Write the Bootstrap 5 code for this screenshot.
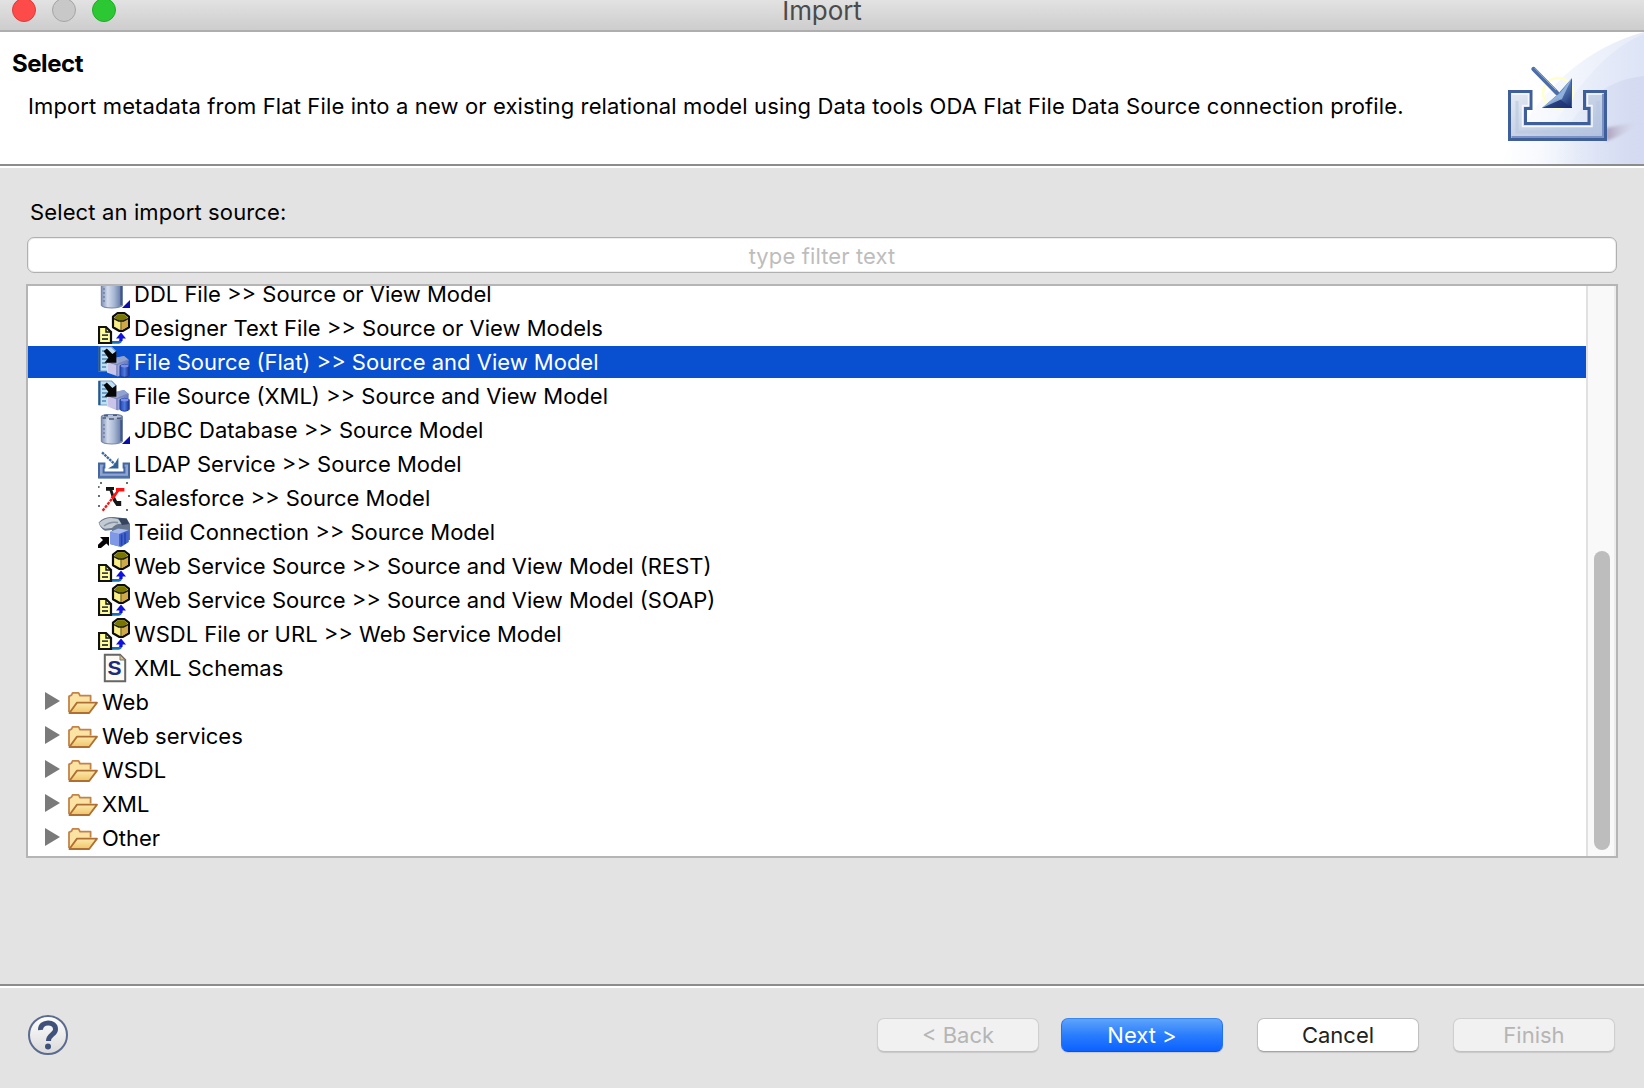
<!DOCTYPE html>
<html lang="en">
<head>
<meta charset="utf-8">
<title>Import</title>
<meta name="viewport" content="width=device-width, initial-scale=1">
<link href="https://cdn.jsdelivr.net/npm/bootstrap@5.3.0/dist/css/bootstrap.min.css" rel="stylesheet">
<style>
  body { font-family: Inter, "Liberation Sans", sans-serif; font-size: 22px; line-height: 32px; color: #000; background: #e3e3e3; }
  .wizard { height: 1088px; width: 1644px; }
  .titlebar { height: 32px; background: linear-gradient(#e2e2e2, #cdcdcd); border-bottom: 2px solid #aeaeae; }
  .lights { left: 12px; top: -2px; gap: 16px; }
  .light { width: 24px; height: 24px; border: 1px solid; }
  .light-close { background: #fd4b4a; border-color: #e0393a; }
  .light-min { background: #c8c8c8; border-color: #a5a5a5; }
  .light-max { background: #2bc833; border-color: #1fad28; }
  .window-title { font-size: 26px; line-height: 22px; color: #4b4b4b; letter-spacing: -.1px; }
  .banner { height: 134px; border-bottom: 2px solid #8c8c8c; }
  .banner-copy { padding: 16px 0 0 12px; }
  .banner h1 { font-size: 24px; line-height: 32px; font-weight: 700; letter-spacing: -.45px; }
  .banner p { padding: 10px 0 0 16px; letter-spacing: .128px; }
  .content-pane { height: 820px; border-top: 2px solid #fff; border-bottom: 2px solid #8c8c8c; padding: 28px 26px 0; }
  .source-label { padding-left: 4px; line-height: 32px; letter-spacing: .13px; }
  .filter { height: 36px; width: 1590px; margin: 9px 0 11px 1px; padding: 1px 0 0; border: 1px solid #b0b0b0; border-radius: 7px; font-size: 22px; box-shadow: inset 0 0 0 1px #eee; color: #000; letter-spacing: .12px; }
  .filter::placeholder { color: #bdbdbd; opacity: 1; }
  .tree-frame { width: 1592px; height: 574px; border: 2px solid #b5b5b5; }
  .tree { margin-top: -8px; gap: 2px; }
  .tree li { height: 32px; white-space: nowrap; }
  .tree .leaf { padding-left: 70px; }
  .tree .leaf svg { margin-right: 4px; }
  .tree .branch { padding-left: 17px; }
  .tree .twisty { width: 15px; height: 18px; margin-right: 6px; margin-top: -2px; }
  .tree .branch .ico { margin-right: 4px; }
  .ico { width: 32px; height: 32px; flex: none; }
  .tree .chosen { background: #0950d0; color: #fff; }
  .track { width: 30px; border-left: 2px solid #e1e1e1; border-right: 2px solid #ececec; background: #f9f9f9; padding: 265px 4px 6px 6px; }
  .thumb { width: 16px; height: 299px; background: #bdbdbd; border-radius: 8px; }
  .footer-bar { height: 100px; border-top: 2px solid #fff; padding: 0 29px 4px 28px; }
  .push { width: 162px; height: 34px; padding: 0; font-size: 22px; line-height: 32px; border-radius: 7px; border: 1px solid #c0c0c0; border-bottom-color: #a5a5a5; background: #fff; color: #222; box-shadow: 0 1px 1px rgba(0,0,0,.12); }
  .push:disabled { opacity: 1; background: #f1f1f1; color: #b5b5b5; border-color: #cfcfcf; border-bottom-color: #c0c0c0; }
  .push-main { background: linear-gradient(#5ea4fb, #2a7dfc 50%, #0a62ff); border-color: #3a86f2 #2170fa #0a50ec; color: #fff; }
  .gap-wide { margin-left: 34px; }
  .gap-near { margin-left: 22px; }
</style>
<script src="https://cdn.jsdelivr.net/npm/bootstrap@5.3.0/dist/js/bootstrap.bundle.min.js"></script>
</head>
<body class="overflow-hidden">
<svg width="0" height="0" class="position-absolute">
  <defs>
    <linearGradient id="cylFill"><stop offset="0" stop-color="#7f8fb4"/><stop offset=".3" stop-color="#d3dcec"/><stop offset=".6" stop-color="#a9b8d4"/><stop offset="1" stop-color="#5a6f9c"/></linearGradient>
    <linearGradient id="foldFill" x2="0" y2="1"><stop offset="0" stop-color="#fdeaae"/><stop offset="1" stop-color="#efc467"/></linearGradient>
    <linearGradient id="cubeFill"><stop offset="0" stop-color="#dcdcf4"/><stop offset="1" stop-color="#5c77bb"/></linearGradient>
    <linearGradient id="blueFill"><stop offset="0" stop-color="#2146b0"/><stop offset=".5" stop-color="#4f79dc"/><stop offset="1" stop-color="#132f90"/></linearGradient>
  </defs>
  <symbol id="i-db" viewBox="0 0 16 16">
    <path d="M1.7 1.3Q2 .2 7 .1Q12 .2 12.2 1.3V13.6Q11.5 14.8 7 15Q2.3 14.8 1.7 13.6Z" fill="url(#cylFill)" stroke="#7587ad" stroke-width=".6"/>
    <path d="M2.2 1.2Q7 -.2 11.8 1.2Q11 2.4 7 2.5Q3 2.4 2.2 1.2Z" fill="#b4c0d6"/>
    <path d="M3 .8H5M7.5 .6H9.5M2.3 2H4M5.5 2.5H8M9.5 2.1H11.4" stroke="#4c5b7d" stroke-width=".8"/>
    <path d="M3 5V13" stroke="#6e7fa6" stroke-width=".7" stroke-dasharray="1 1"/><path d="M11.6 3V13.5" stroke="#40568a" stroke-width=".9"/>
    <path d="M16 11V15H12Z" fill="#0b0ba8"/>
  </symbol>
  <symbol id="i-model" viewBox="0 0 16 16">
    <path d="M7 15.2H10.3Q11.5 15 11.5 13.5V12" fill="none" stroke="#1a6fb4" stroke-width="1.4"/>
    <path d="M11.5 14.5V12" stroke="#1010e0" stroke-width="1.5"/>
    <path d="M9 13.2L11.5 10.300L14 13.2Z" fill="#1010e0"/>
    <path d="M7.500 2.300L9.800 .6H13.2L15.500 2.300V7.600L12.500 9.400H10.500L7.500 7.600Z" fill="#f8ee88" stroke="#0c0c0c" stroke-width="1.1" stroke-linejoin="round"/>
    <path d="M11.700 4.500L15 3.200V7.300L12.300 8.900H11.700Z" fill="#cfa848"/>
    <path d="M8.100 2.700L10 1.100H13L14.900 2.700L12.600 4.200H10.400Z" fill="#777700"/>
    <path d="M11.500 4.200V8.900" stroke="#6b5a20" stroke-width=".6"/>
    <path d="M8 3.300L10.300 4.500H12.700L15 3.300" fill="none" stroke="#1c1c08" stroke-width=".8"/>
    <path d="M.5 7.5H4L6.5 10V15.5H.5Z" fill="#ffff9c" stroke="#111" stroke-width="1.1"/>
    <path d="M4 7.5V10H6.5" fill="none" stroke="#111" stroke-width=".7"/>
    <path d="M2 11.6H5M2 13.5H5" stroke="#444" stroke-width=".9"/>
  </symbol>
  <symbol id="i-file" viewBox="0 0 16 16">
    <path d="M.5 .5H6.800L8.800 2.500V12.500H.5Z" fill="#bfdff2" stroke="#7ba0c6" stroke-width=".6"/>
    <path d="M.7 .5V12.500" stroke="#23578e" stroke-width="1.100"/><path d="M2 2.500H4M2 4.500H5M2 6.500H5M2 8.500H5M2 10.500H4" stroke="#538bb8" stroke-width=".8"/>
    <path d="M4.500 8L8 6L13 5L15.300 7V12L10 15.200L4.500 13.200Z" fill="url(#cubeFill)"/>
    <path d="M9 6L13 5L15.200 6.800L11.500 8.500Z" fill="#8ea3cf"/>
    <path d="M4.500 8L9.500 9.300L15.200 7M9.500 9.300V15" fill="none" stroke="#7c83bd" stroke-width=".7"/>
    <path d="M5 8.400L9 9.600V14.500L5 12.800Z" fill="#c9c4e8"/>
    <path d="M2.800 2.600L4.400 1.200L7.200 4L9.200 2.500V8.400H3.200L5.200 6Z" fill="#060606"/>
    <path d="M11 9.800Q13.300 8.500 15.600 9.800V14.800Q13.300 16.400 11 14.800Z" fill="url(#blueFill)" stroke="#1a3ba0" stroke-width=".5"/>
    <ellipse cx="13.300" cy="10" rx="2" ry=".7" fill="#7e8fe6"/>
  </symbol>
  <symbol id="i-tray" viewBox="0 0 16 16">
    <path d="M.5 7.700H3.200V9.800H2.800V12.200H13.200V9.800H12.800V7.700H15.500V14.800H.5Z" fill="#8da5d0" stroke="#4566a2" stroke-width="1"/>
    <path d="M.5 14.500H15.500" stroke="#5070ac" stroke-width="1.200"/>
    <path d="M2 2.200L8.500 8.200" stroke="#3f699f" stroke-width="1.200" stroke-dasharray="1.300 .35"/>
    <path d="M10.200 4.800V10.200H5L8 8.500Z" fill="#2f6398"/>
  </symbol>
  <symbol id="i-sf" viewBox="0 0 16 16">
    <path d="M4 2.500H8V4H7.200L8 6.500L9.500 9.500H11.600V12H9.200L7.500 9.500L5.800 4.400H4Z" fill="#151515"/>
    <path d="M9 3H13.200V4.800H10.500L7.700 8.700L6.300 7.800L9 4.700Z" fill="#fb1414"/>
    <path d="M2.300 14.400L7.300 8" stroke="#ef1c1c" stroke-width="1.200" stroke-dasharray="1.500 .5"/>
    <path d="M1 .5H2M14 .5H15M0 2.500H.8M0 7H1M15 7H16M0 12H1M14 14H15M.4 11.500V12.500" stroke="#657070" stroke-width="1"/>
  </symbol>
  <symbol id="i-teiid" viewBox="0 0 16 16">
    <path d="M.3 3.200Q3 .2 8 .5L14.300 1.200L16 4V12H6L7 7L3.500 7.400Q1 6 .3 3.200Z" fill="#66768c"/>
    <path d="M.6 3.400Q4 .4 8.500 1.200Q12 1.800 13 4Q9 3.400 7 6L3.500 6.400Q1 5.500 .6 3.400Z" fill="#c3cad1"/>
    <path d="M3 5Q6 2.600 10 3.300" fill="none" stroke="#8592a2" stroke-width=".8"/>
    <path d="M10 1L14.300 1.300L15.600 4L12 4.500Z" fill="#35445d"/>
    <path d="M6 8L10 6.300L15.400 7V13L11.500 15.500L6 14Z" fill="#4262cc"/>
    <path d="M6 8L10.500 9V15.200L6 14Z" fill="#7f99e6"/><path d="M6 8L10 6.300L15.400 7L10.500 9Z" fill="#a9bbea"/>
    <path d="M11.800 9.200V14.800M13.500 8.400V14" stroke="#2444ad" stroke-width=".8"/>
    <path d="M1 10.500H5.500V15L4.200 13.800L1.500 16H0V14.400L2.500 12Z" fill="#050505"/>
  </symbol>
  <symbol id="i-xsd" viewBox="0 0 16 16">
    <path d="M3.400 1.400H11L13.600 4V14.600H3.400Z" fill="#fbfbf3" stroke="#666" stroke-width="1"/>
    <path d="M11 1.400V4H13.600Z" fill="#d9c08d" stroke="#777" stroke-width=".5"/>
    <text x="8.300" y="11.700" text-anchor="middle" font-family="Liberation Sans, sans-serif" font-size="10.500" font-weight="700" fill="#1c2a80">S</text>
  </symbol>
  <symbol id="i-folder" viewBox="0 0 16 16">
    <path d="M1.500 13V5.200L2.800 4.500L3.300 3.400H6.300L7 4.800H12.300V7.800" fill="#fbe3a4" stroke="#c0844a" stroke-width=".9" stroke-linejoin="round"/>
    <path d="M1.700 13.500L5.500 8.300H15.500L11.600 13.500Z" fill="url(#foldFill)" stroke="#b06f32" stroke-width=".9" stroke-linejoin="round"/>
  </symbol>
  <symbol id="i-twisty" viewBox="0 0 15 18"><path d="M0 0L15 9L0 18Z" fill="#7a7a7a"/></symbol>
</svg>

<div class="wizard d-flex flex-column">
  <header class="titlebar position-relative text-center">
    <div class="lights position-absolute d-flex">
      <span class="light light-close rounded-circle"></span>
      <span class="light light-min rounded-circle"></span>
      <span class="light light-max rounded-circle"></span>
    </div>
    <div class="window-title">Import</div>
  </header>

  <section class="banner bg-white d-flex justify-content-between">
    <div class="banner-copy">
      <h1 class="m-0">Select</h1>
      <p class="m-0 text-nowrap">Import metadata from Flat File into a new or existing relational model using Data tools ODA Flat File Data Source connection profile.</p>
    </div>
    <svg class="flex-shrink-0" width="200" height="132" viewBox="0 0 200 132">
      <defs>
        <linearGradient id="sky"><stop offset="0" stop-color="#fff"/><stop offset=".45" stop-color="#f0f4fc"/><stop offset="1" stop-color="#dfe5f6"/></linearGradient>
        <linearGradient id="arcA"><stop offset="0" stop-color="#e6ecf9" stop-opacity="0"/><stop offset="1" stop-color="#dde4f6"/></linearGradient>
        <linearGradient id="arcB"><stop offset="0" stop-color="#d6ddf3" stop-opacity="0"/><stop offset="1" stop-color="#d3daf1"/></linearGradient>
        <linearGradient id="steel" x2="1" y2="1"><stop offset="0" stop-color="#e6ebf4"/><stop offset=".5" stop-color="#c6d2e6"/><stop offset="1" stop-color="#aebfe0"/></linearGradient>
        <linearGradient id="shade"><stop offset="0" stop-color="#a9a0b8"/><stop offset="1" stop-color="#dcdcf0" stop-opacity="0"/></linearGradient>
        <linearGradient id="head" x2="1" y2="1"><stop offset=".2" stop-color="#b7cdea"/><stop offset=".5" stop-color="#5c82bc"/><stop offset="1" stop-color="#14286c"/></linearGradient>
        <filter id="soft" x="-20%" y="-50%" width="140%" height="200%"><feGaussianBlur stdDeviation="1.500"/></filter>
      </defs>
      <path d="M56 132C82 84 120 22 200 0V132Z" fill="url(#sky)" opacity=".8"/>
      <path d="M90 132C112 84 150 22 200 2V132Z" fill="url(#arcA)"/>
      <path d="M110 132C122 78 160 47 200 44V132Z" fill="url(#arcB)"/>
      <path d="M162 96L196 89Q186 101 162 109Z" fill="url(#shade)" filter="url(#soft)"/>
      <circle cx="114" cy="61" r="15" fill="none" stroke="#ffffcc" stroke-width="2.500"/>
      <path d="M65.500 59.500H87V76.500H81.500V91.500H145V76.500H140.500V59.500H161.500V107.500H65.500Z" fill="url(#steel)" stroke="#3f5f9b" stroke-width="3"/>
      <path d="M68 62H84.500V73.500H78.500V94.500H148V73.500H143.500V62H158.500" fill="none" stroke="#f6f8fc" stroke-width="1.500"/>
      <path d="M67.500 105H159V62" fill="none" stroke="#7c92c4" stroke-width="2"/>
      <path d="M73 69V100H154V69" fill="none" stroke="#b9c6df" stroke-width="3" opacity=".6"/>
      <path d="M89.500 37L113 61" stroke="#4c6da5" stroke-width="4.400" stroke-linecap="round"/>
      <path d="M90.500 36L112 58" stroke="#94b0d6" stroke-width="1"/>
      <path d="M128 46V76H98L113 63Z" fill="url(#head)"/>
      <path d="M98 76H128L114 66Z" fill="#1c3272" opacity=".75"/>
      <path d="M127.500 47V75" stroke="#405a96" stroke-width="1"/>
      <path d="M98 76L116 61L128 46L118 67Z" fill="#9fc0e6" opacity=".8"/>
    </svg>
  </section>

  <main class="content-pane">
    <div class="source-label">Select an import source:</div>
    <input class="filter form-control text-center" type="text" placeholder="type filter text">
    <div class="tree-frame bg-white d-flex overflow-hidden">
      <ul class="tree list-unstyled mb-0 flex-grow-1 d-flex flex-column">
        <li class="leaf d-flex"><svg class="ico"><use href="#i-db"/></svg><span>DDL File &gt;&gt; Source or View Model</span></li>
        <li class="leaf d-flex"><svg class="ico"><use href="#i-model"/></svg><span>Designer Text File &gt;&gt; Source or View Models</span></li>
        <li class="leaf d-flex chosen"><svg class="ico"><use href="#i-file"/></svg><span>File Source (Flat) &gt;&gt; Source and View Model</span></li>
        <li class="leaf d-flex"><svg class="ico"><use href="#i-file"/></svg><span>File Source (XML) &gt;&gt; Source and View Model</span></li>
        <li class="leaf d-flex"><svg class="ico"><use href="#i-db"/></svg><span>JDBC Database &gt;&gt; Source Model</span></li>
        <li class="leaf d-flex"><svg class="ico"><use href="#i-tray"/></svg><span>LDAP Service &gt;&gt; Source Model</span></li>
        <li class="leaf d-flex"><svg class="ico"><use href="#i-sf"/></svg><span>Salesforce &gt;&gt; Source Model</span></li>
        <li class="leaf d-flex"><svg class="ico"><use href="#i-teiid"/></svg><span>Teiid Connection &gt;&gt; Source Model</span></li>
        <li class="leaf d-flex"><svg class="ico"><use href="#i-model"/></svg><span>Web Service Source &gt;&gt; Source and View Model (REST)</span></li>
        <li class="leaf d-flex"><svg class="ico"><use href="#i-model"/></svg><span>Web Service Source &gt;&gt; Source and View Model (SOAP)</span></li>
        <li class="leaf d-flex"><svg class="ico"><use href="#i-model"/></svg><span>WSDL File or URL &gt;&gt; Web Service Model</span></li>
        <li class="leaf d-flex"><svg class="ico"><use href="#i-xsd"/></svg><span>XML Schemas</span></li>
        <li class="branch d-flex align-items-center"><svg class="twisty"><use href="#i-twisty"/></svg><svg class="ico"><use href="#i-folder"/></svg><span>Web</span></li>
        <li class="branch d-flex align-items-center"><svg class="twisty"><use href="#i-twisty"/></svg><svg class="ico"><use href="#i-folder"/></svg><span>Web services</span></li>
        <li class="branch d-flex align-items-center"><svg class="twisty"><use href="#i-twisty"/></svg><svg class="ico"><use href="#i-folder"/></svg><span>WSDL</span></li>
        <li class="branch d-flex align-items-center"><svg class="twisty"><use href="#i-twisty"/></svg><svg class="ico"><use href="#i-folder"/></svg><span>XML</span></li>
        <li class="branch d-flex align-items-center"><svg class="twisty"><use href="#i-twisty"/></svg><svg class="ico"><use href="#i-folder"/></svg><span>Other</span></li>
      </ul>
      <div class="track flex-shrink-0"><div class="thumb"></div></div>
    </div>
  </main>

  <footer class="footer-bar d-flex align-items-center">
    <svg class="me-auto" width="40" height="40" viewBox="0 0 40 40">
      <defs><linearGradient id="dome" x2="0" y2="1"><stop offset="0" stop-color="#fff"/><stop offset="1" stop-color="#d9d9d9"/></linearGradient></defs>
      <circle cx="20" cy="20" r="19" fill="url(#dome)" stroke="#5a6b8f" stroke-width="2"/>
      <path d="M12.500 15C12 5.800 28 5.500 27.500 14.500C27.500 19.500 20.500 19.500 20.500 26" fill="none" stroke="#40527c" stroke-width="5"/>
      <circle cx="20" cy="31.500" r="3" fill="#40527c"/>
    </svg>
    <button class="btn push" disabled>&lt; Back</button>
    <button class="btn push push-main gap-near">Next &gt;</button>
    <button class="btn push gap-wide">Cancel</button>
    <button class="btn push gap-wide" disabled>Finish</button>
  </footer>
</div>
</body>
</html>
